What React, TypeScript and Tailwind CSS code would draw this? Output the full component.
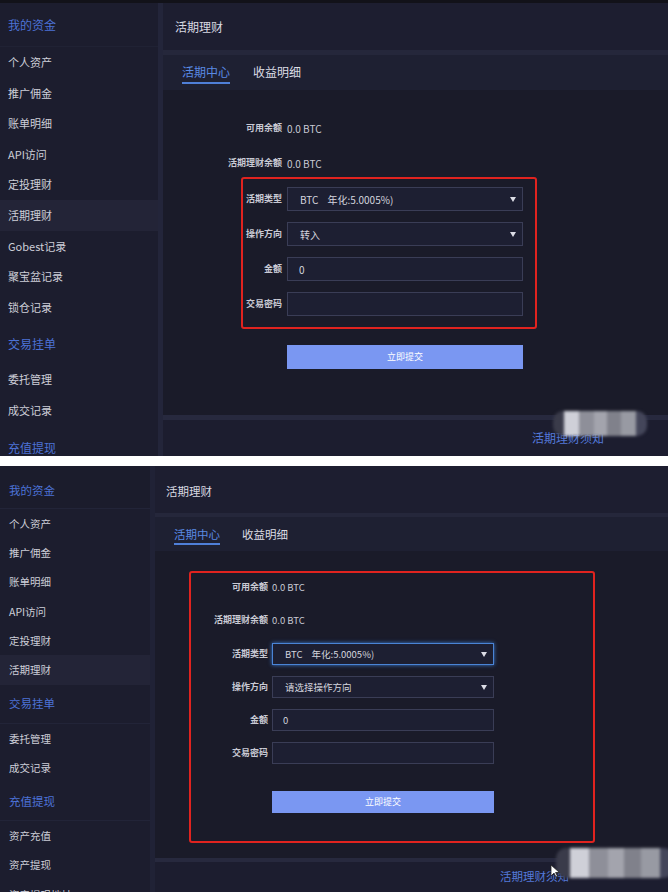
import React from "react";

const FONT = "font-['Noto_Sans_CJK_SC','Noto_Sans',sans-serif]";

type Entry = { kind: "head" | "item"; text: string; active?: boolean };

const topSide: Entry[] = [
  { kind: "item", text: "个人资产" },
  { kind: "item", text: "推广佣金" },
  { kind: "item", text: "账单明细" },
  { kind: "item", text: "API访问" },
  { kind: "item", text: "定投理财" },
  { kind: "item", text: "活期理财", active: true },
  { kind: "item", text: "Gobest记录" },
  { kind: "item", text: "聚宝盆记录" },
  { kind: "item", text: "锁仓记录" },
  { kind: "head", text: "交易挂单" },
  { kind: "item", text: "委托管理" },
  { kind: "item", text: "成交记录" },
  { kind: "head", text: "充值提现" },
];

const bottomSide: Entry[] = [
  { kind: "item", text: "个人资产" },
  { kind: "item", text: "推广佣金" },
  { kind: "item", text: "账单明细" },
  { kind: "item", text: "API访问" },
  { kind: "item", text: "定投理财" },
  { kind: "item", text: "活期理财", active: true },
  { kind: "head", text: "交易挂单" },
  { kind: "item", text: "委托管理" },
  { kind: "item", text: "成交记录" },
  { kind: "head", text: "充值提现" },
  { kind: "item", text: "资产充值" },
  { kind: "item", text: "资产提现" },
  { kind: "item", text: "资产提现地址" },
];

function Caret() {
  return (
    <svg width="6" height="5" viewBox="0 0 6 5" className="shrink-0">
      <path d="M0 0H6L3 5Z" fill="#dcdde6" />
    </svg>
  );
}

function Watermark() {
  return (
    <div className="flex h-full w-full items-stretch overflow-hidden rounded-[10px] blur-[1.5px]">
      <div className="w-[12%] bg-[#3a3b4a]" />
      <div className="w-[16%] bg-[#cfd0d8]" />
      <div className="w-[16%] bg-[#8e8f99]" />
      <div className="w-[14%] bg-[#a3a4ad]" />
      <div className="w-[14%] bg-[#80818b]" />
      <div className="w-[16%] bg-[#989aa3]" />
      <div className="w-[12%] bg-[#44465a]" />
    </div>
  );
}

function TopScreen() {
  return (
    <div className="relative flex h-[456px] flex-col bg-[#121219]">
      <div className="h-[3px] shrink-0 bg-[#121219]" />
      <div className="flex min-h-0 flex-1">
        <aside className="flex w-[158px] flex-col overflow-hidden bg-[#1c1d2e]">
          <div className="flex h-[44px] shrink-0 items-center border-b border-[#202234] pl-2 text-[12px] text-[#4c72d6]">
            我的资金
          </div>
          {topSide.map((e, i) =>
            e.kind === "head" ? (
              <div
                key={i}
                className="flex h-[42px] shrink-0 items-center pl-2 pt-[2px] text-[12px] text-[#4c72d6]"
              >
                {e.text}
              </div>
            ) : (
              <div
                key={i}
                className={
                  "flex h-[30.6px] shrink-0 items-center pl-2 text-[11px] text-[#cdced8] " +
                  (e.active ? "bg-[#232437]" : "")
                }
              >
                {e.text}
              </div>
            )
          )}
        </aside>
        <div className="w-[5px] shrink-0 bg-[#23253a]" />
        <main className="flex min-w-0 flex-1 flex-col">
          <div className="flex h-[47px] shrink-0 items-center bg-[#1d1e30] pl-3 text-[12px] text-[#d8d9e1]">
            活期理财
          </div>
          <div className="h-[5px] shrink-0 bg-[#25273b]" />
          <div className="flex h-[35px] shrink-0 items-start gap-[23px] bg-[#1e2032] pl-[19px] pt-[9px] text-[12px]">
            <div className="border-b-2 border-[#4f7fd8] pb-[2px] leading-[16px] text-[#5a8ae4]">
              活期中心
            </div>
            <div className="pb-[2px] leading-[16px] text-[#dcdde5]">收益明细</div>
          </div>
          <div className="flex flex-1 flex-col bg-[#1a1b29] pl-[78px] pt-[26px]">
            <div className="flex flex-col gap-[11px]">
              <div className="flex h-[24px] items-center gap-[5px]">
                <div className="flex w-[41px] justify-end whitespace-nowrap text-[9px] font-bold text-[#c9cad4]">
                  可用余额
                </div>
                <div className="text-[10px] text-[#c9cad4]">0.0 BTC</div>
              </div>
              <div className="flex h-[24px] items-center gap-[5px]">
                <div className="flex w-[41px] justify-end whitespace-nowrap text-[9px] font-bold text-[#c9cad4]">
                  活期理财余额
                </div>
                <div className="text-[10px] text-[#c9cad4]">0.0 BTC</div>
              </div>
            </div>
            <div className="mt-[2px] flex w-[296px] flex-col gap-[11px] rounded-[3px] border-2 border-[#e0231f] pb-[11px] pt-[8px]">
              <div className="flex h-[24px] items-center gap-[5px]">
                <div className="flex w-[39px] justify-end whitespace-nowrap text-[9px] font-bold text-[#c9cad4]">
                  活期类型
                </div>
                <div className="flex h-full w-[236px] items-center justify-between border border-[#3a3d56] bg-[#1d1f32] pl-[12px] pr-[6px] text-[10px] text-[#d4d5de]">
                  <span className="flex gap-[9px]">
                    <span>BTC</span>
                    <span>年化:5.0005%)</span>
                  </span>
                  <Caret />
                </div>
              </div>
              <div className="flex h-[24px] items-center gap-[5px]">
                <div className="flex w-[39px] justify-end whitespace-nowrap text-[9px] font-bold text-[#c9cad4]">
                  操作方向
                </div>
                <div className="flex h-full w-[236px] items-center justify-between border border-[#3a3d56] bg-[#1d1f32] pl-[12px] pr-[6px] text-[10px] text-[#d4d5de]">
                  <span>转入</span>
                  <Caret />
                </div>
              </div>
              <div className="flex h-[24px] items-center gap-[5px]">
                <div className="flex w-[39px] justify-end whitespace-nowrap text-[9px] font-bold text-[#c9cad4]">
                  金额
                </div>
                <div className="flex h-full w-[236px] items-center border border-[#3a3d56] bg-[#1d1f32] pl-[11px] text-[10px] text-[#d4d5de]">
                  0
                </div>
              </div>
              <div className="flex h-[24px] items-center gap-[5px]">
                <div className="flex w-[39px] justify-end whitespace-nowrap text-[9px] font-bold text-[#c9cad4]">
                  交易密码
                </div>
                <div className="h-full w-[236px] border border-[#3a3d56] bg-[#1d1f32]" />
              </div>
            </div>
            <div className="ml-[46px] mt-[16px] flex h-[24px] w-[236px] items-center justify-center bg-[#7a97f2] text-[9px] text-white">
              立即提交
            </div>
          </div>
          <div className="h-[5px] shrink-0 bg-[#27293e]" />
          <div className="flex h-[36px] shrink-0 items-center justify-end bg-[#1c1d2f] pr-[64px] text-[12px] text-[#5479d9]">
            活期理财须知
          </div>
        </main>
      </div>
      <div className="absolute left-[553px] top-[411px] h-[25px] w-[94px]">
        <Watermark />
      </div>
    </div>
  );
}

function BottomScreen() {
  return (
    <div className="relative flex h-[426px] overflow-hidden bg-[#121219]">
      <aside className="flex w-[150px] shrink-0 flex-col overflow-hidden bg-[#1c1d2e]">
        <div className="flex h-[43px] shrink-0 items-center border-b border-[#222438] bg-[#1b1c2c] pl-[9px] pt-[8px] text-[11.5px] text-[#4c72d6]">
          我的资金
        </div>
        {bottomSide.map((e, i) =>
          e.kind === "head" ? (
            <div
              key={i}
              className="flex h-[39px] shrink-0 items-center border-b border-[#222438] pl-[9px] text-[11.5px] text-[#4c72d6]"
            >
              {e.text}
            </div>
          ) : (
            <div
              key={i}
              className={
                "flex h-[29.3px] shrink-0 items-center pl-[9px] text-[10.5px] text-[#cdced8] " +
                (e.active ? "bg-[#232437]" : "")
              }
            >
              {e.text}
            </div>
          )
        )}
      </aside>
      <div className="w-[5px] shrink-0 bg-[#202236]" />
      <main className="flex min-w-0 flex-1 flex-col">
        <div className="flex h-[47px] shrink-0 items-center bg-[#1d1e30] pl-[11px] pt-[5px] text-[11.5px] text-[#d8d9e1]">
          活期理财
        </div>
        <div className="h-[4px] shrink-0 bg-[#25273b]" />
        <div className="flex h-[34px] shrink-0 items-start gap-[22px] bg-[#1e2032] pl-[19px] pt-[9px] text-[11.5px]">
          <div className="border-b-2 border-[#4f7fd8] pb-[1px] leading-[16px] text-[#5a8ae4]">
            活期中心
          </div>
          <div className="pb-[1px] leading-[16px] text-[#dcdde5]">收益明细</div>
        </div>
        <div className="flex flex-1 flex-col bg-[#1a1b29] pl-[34px] pt-[20px]">
          <div className="flex w-[406px] flex-col gap-[11px] rounded-[3px] border-2 border-[#e0231f] pb-[28px] pt-[3px]">
            <div className="flex h-[22px] items-center gap-[4px]">
              <div className="flex w-[77px] justify-end whitespace-nowrap text-[9px] font-bold text-[#c9cad4]">
                可用余额
              </div>
              <div className="text-[9.5px] text-[#c9cad4]">0.0 BTC</div>
            </div>
            <div className="flex h-[22px] items-center gap-[4px]">
              <div className="flex w-[77px] justify-end whitespace-nowrap text-[9px] font-bold text-[#c9cad4]">
                活期理财余额
              </div>
              <div className="text-[9.5px] text-[#c9cad4]">0.0 BTC</div>
            </div>
            <div className="mt-[1px] flex h-[22px] items-center gap-[4px]">
              <div className="flex w-[77px] justify-end whitespace-nowrap text-[9px] font-bold text-[#c9cad4]">
                活期类型
              </div>
              <div className="flex h-full w-[222px] items-center justify-between border border-[#4a84d6] bg-[#1d1f32] pl-[12px] pr-[6px] text-[9.5px] text-[#d4d5de] shadow-[0_0_4px_#3a78d0]">
                <span className="flex gap-[9px]">
                  <span>BTC</span>
                  <span>年化:5.0005%)</span>
                </span>
                <Caret />
              </div>
            </div>
            <div className="flex h-[22px] items-center gap-[4px]">
              <div className="flex w-[77px] justify-end whitespace-nowrap text-[9px] font-bold text-[#c9cad4]">
                操作方向
              </div>
              <div className="flex h-full w-[222px] items-center justify-between border border-[#3a3d56] bg-[#1d1f32] pl-[12px] pr-[6px] text-[9.5px] text-[#d4d5de]">
                <span>请选择操作方向</span>
                <Caret />
              </div>
            </div>
            <div className="flex h-[22px] items-center gap-[4px]">
              <div className="flex w-[77px] justify-end whitespace-nowrap text-[9px] font-bold text-[#c9cad4]">
                金额
              </div>
              <div className="flex h-full w-[222px] items-center border border-[#3a3d56] bg-[#1d1f32] pl-[10px] text-[9.5px] text-[#d4d5de]">
                0
              </div>
            </div>
            <div className="flex h-[22px] items-center gap-[4px]">
              <div className="flex w-[77px] justify-end whitespace-nowrap text-[9px] font-bold text-[#c9cad4]">
                交易密码
              </div>
              <div className="h-full w-[222px] border border-[#3a3d56] bg-[#1d1f32]" />
            </div>
            <div className="ml-[81px] mt-[16px] flex h-[22px] w-[222px] items-center justify-center bg-[#7a97f2] text-[9px] text-white">
              立即提交
            </div>
          </div>
        </div>
        <div className="h-[4px] shrink-0 bg-[#27293e]" />
        <div className="flex h-[30px] shrink-0 items-center justify-end bg-[#1c1d2f] pr-[99px] text-[11.5px] text-[#5479d9]">
          活期理财须知
        </div>
      </main>
      <div className="absolute left-[556px] top-[382px] h-[30px] w-[118px]">
        <Watermark />
      </div>
      <svg
        className="absolute left-[550px] top-[398px]"
        width="10"
        height="14"
        viewBox="0 0 10 14"
      >
        <path d="M1 1V12L4 9L6 13L7.5 12.3L5.6 8.5H9.5Z" fill="#ffffff" stroke="#222" strokeWidth="0.8" />
      </svg>
    </div>
  );
}

export default function App() {
  return (
    <div className={"h-[892px] w-[668px] overflow-hidden bg-white " + FONT}>
      <TopScreen />
      <div className="h-[10px] bg-white" />
      <BottomScreen />
    </div>
  );
}
